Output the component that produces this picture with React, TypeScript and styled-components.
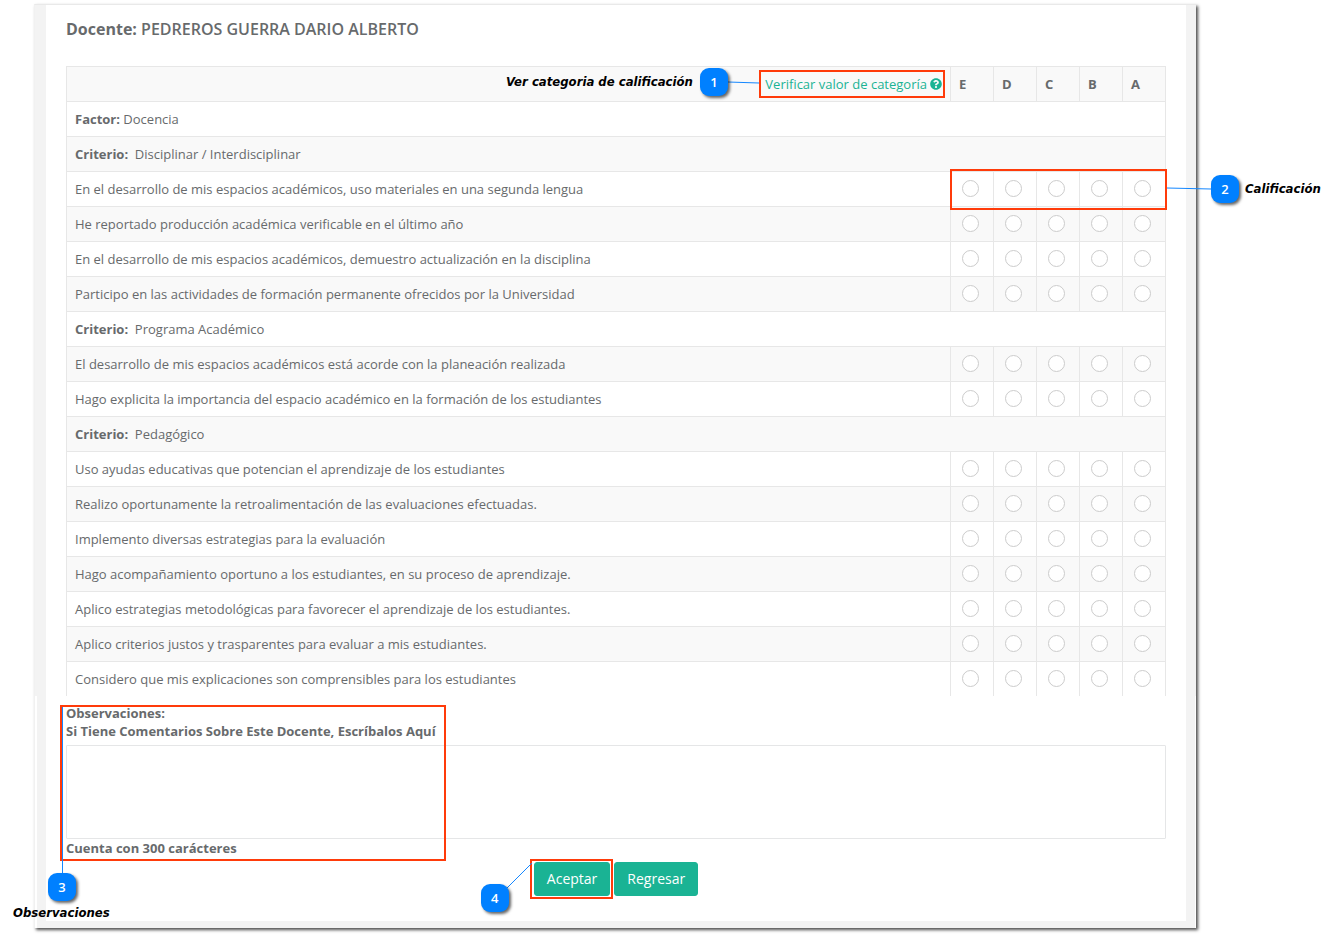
import React, { useState } from "react";
import styled, { createGlobalStyle } from "styled-components";
import { FaQuestionCircle } from "react-icons/fa";

const GlobalStyle = createGlobalStyle`
  *, *::before, *::after { box-sizing: border-box; }
  body {
    margin: 0;
    background: #fff;
    color: #676a6c;
    font: 13px/18px "Open Sans", "Noto Sans", sans-serif;
  }
`;

const Page = styled.main`
  padding: 4px 141px 9px 34px;
`;

const Frame = styled.form`
  border-top: 1px solid #e9e9e9;
  border-left: 1px solid #f1f1f1;
  background: #fff;
  box-shadow: 2px 2px 3px rgba(0, 0, 0, 0.7);
`;

const SurveySection = styled.section`
  padding: 14px 20px 0;
  border: solid #f3f3f3;
  border-width: 0 10px 0 11px;
`;

const CommentSection = styled.section`
  margin: 0 1px 0 2px;
  padding: 8px 20px 25px;
  border: solid #f3f3f3;
  border-width: 0 9px 7px 9px;
`;

const Title = styled.h1`
  margin: 0 0 27px;
  font-size: 16px;
  line-height: 20px;
  font-weight: 600;

  strong { font-weight: 700; }
`;

const Table = styled.table`
  width: 100%;
  table-layout: fixed;
  border-spacing: 0;
  border-left: 1px solid #e7e7e7;
`;

const Row = styled.tr<{ $shaded: boolean }>`
  background: ${(p) => (p.$shaded ? "#f9f9f9" : "#fff")};
`;

const Cell = styled.td`
  height: 35px;
  padding: 0 8px;
  border-top: 1px solid #e7e7e7;
  border-right: 1px solid #e7e7e7;
  text-align: left;
  font-weight: 400;
`;

const LinkCell = styled(Cell)`
  text-align: right;
`;

const GradeHeader = styled(Cell)`
  width: 43px;
  font-weight: 700;
`;

const RadioCell = styled(Cell)`
  position: relative;
`;

const Radio = styled.input`
  display: block;
  appearance: none;
  width: 17px;
  height: 17px;
  margin: 0 3px 2px;
  border: 1px solid #ccc;
  border-radius: 50%;
  background: #fff;

  &:checked { border-color: #1ab394; background: radial-gradient(#1ab394 45%, #fff 50%); }
`;

const HelpLink = styled.a`
  position: relative;
  display: inline-flex;
  align-items: center;
  gap: 3px;
  color: #1ab394;
  text-decoration: none;
  white-space: nowrap;
`;

const CommentLabel = styled.label`
  display: block;
  font-weight: 700;
`;

const CommentBox = styled.textarea`
  display: block;
  width: 100%;
  height: 94px;
  margin-top: 5px;
  padding: 6px 12px;
  border: 1px solid #e5e6e7;
  border-radius: 1px;
  background: #fff;
  color: inherit;
  font: inherit;
  resize: none;
`;

const Counter = styled.p`
  margin: 0;
  font-weight: 700;
`;

const CommentArea = styled.div`
  position: relative;
`;

const Actions = styled.div`
  display: flex;
  justify-content: center;
  gap: 4px;
  margin-top: 5px;
`;

const ActionItem = styled.div`
  position: relative;
`;

const ActionButton = styled.button`
  display: block;
  height: 34px;
  padding: 0 12px;
  border: 1px solid #1ab394;
  border-radius: 3px;
  background: #1ab394;
  color: #fff;
  font: 14px/20px "Open Sans", "Noto Sans", sans-serif;
`;

/* Callouts lie over the form; each one is placed relative to the part it explains. */
type Box = { x: number; y: number };

const Highlight = styled.span<{ $top: number; $left?: number; $right?: number; $width: number; $height: number }>`
  position: absolute;
  z-index: 1;
  top: ${(p) => p.$top}px;
  ${(p) => (p.$left !== undefined ? `left: ${p.$left}px;` : `right: ${p.$right}px;`)}
  width: ${(p) => p.$width}px;
  height: ${(p) => p.$height}px;
  border: 2px solid #ff3b0a;
  pointer-events: none;
`;

const Connector = styled.svg`
  position: absolute;
  top: -2px;
  left: -2px;
  width: 1px;
  height: 1px;
  overflow: visible;
  stroke: #1487ff;
`;

const Badge = styled.span<{ $at: Box }>`
  position: absolute;
  left: ${(p) => p.$at.x - 2}px;
  top: ${(p) => p.$at.y - 2}px;
  width: 28px;
  height: 28px;
  border-radius: 9px;
  background: #0080ff;
  box-shadow: 2px 2px 3px rgba(0, 0, 0, 0.6);
  color: #fff;
  font-size: 13px;
  line-height: 29px;
  font-weight: 600;
  text-align: center;
`;

const Caption = styled.span<{ $at: Box }>`
  position: absolute;
  left: ${(p) => p.$at.x - 2}px;
  top: ${(p) => p.$at.y - 2}px;
  color: #000;
  font: italic 700 13px/18px "DejaVu Sans Condensed", "DejaVu Sans", sans-serif;
  white-space: nowrap;
`;

type CalloutProps = {
  number: number;
  text?: string;
  top: number;
  left?: number;
  right?: number;
  width: number;
  height: number;
  badge: Box;
  caption?: Box;
  from: Box;
  to: Box;
};

function Callout({ number, text, top, left, right, width, height, badge, caption, from, to }: CalloutProps) {
  return (
    <Highlight $top={top} $left={left} $right={right} $width={width} $height={height}>
      <Connector aria-hidden="true">
        <line x1={from.x} y1={from.y} x2={to.x} y2={to.y} />
      </Connector>
      <Badge $at={badge}>{number}</Badge>
      {text && caption && <Caption $at={caption}>{text}</Caption>}
    </Highlight>
  );
}

const grades = ["E", "D", "C", "B", "A"];

type Item = { label: string; name: string } | { question: string };

const items: Item[] = [
  { label: "Factor:", name: " Docencia" },
  { label: "Criterio:", name: "\u00a0 Disciplinar / Interdisciplinar" },
  { question: "En el desarrollo de mis espacios académicos, uso materiales en una segunda lengua" },
  { question: "He reportado producción académica verificable en el último año" },
  { question: "En el desarrollo de mis espacios académicos, demuestro actualización en la disciplina" },
  { question: "Participo en las actividades de formación permanente ofrecidos por la Universidad" },
  { label: "Criterio:", name: "\u00a0 Programa Académico" },
  { question: "El desarrollo de mis espacios académicos está acorde con la planeación realizada" },
  { question: "Hago explicita la importancia del espacio académico en la formación de los estudiantes" },
  { label: "Criterio:", name: "\u00a0 Pedagógico" },
  { question: "Uso ayudas educativas que potencian el aprendizaje de los estudiantes" },
  { question: "Realizo oportunamente la retroalimentación de las evaluaciones efectuadas." },
  { question: "Implemento diversas estrategias para la evaluación" },
  { question: "Hago acompañamiento oportuno a los estudiantes, en su proceso de aprendizaje." },
  { question: "Aplico estrategias metodológicas para favorecer el aprendizaje de los estudiantes." },
  { question: "Aplico criterios justos y trasparentes para evaluar a mis estudiantes." },
  { question: "Considero que mis explicaciones son comprensibles para los estudiantes" },
];

const firstQuestion = items.findIndex((item) => "question" in item);

export default function App() {
  const [comment, setComment] = useState("");

  return (
    <Page>
      <GlobalStyle />
      <Frame onSubmit={(e) => e.preventDefault()}>
        <SurveySection>
          <Title>
            <strong>Docente:</strong> PEDREROS GUERRA DARIO ALBERTO
          </Title>
          <Table>
            <thead>
              <Row $shaded>
                <LinkCell as="th">
                  <HelpLink href="#categorias">
                    Verificar valor de categoría
                    <FaQuestionCircle size={12} />
                    <Callout
                      number={1}
                      text="Ver categoria de calificación"
                      top={-5}
                      right={-3}
                      width={186}
                      height={28}
                      badge={{ x: -59, y: -2 }}
                      caption={{ x: -253, y: 3 }}
                      from={{ x: -31, y: 12 }}
                      to={{ x: 0, y: 13 }}
                    />
                  </HelpLink>
                </LinkCell>
                {grades.map((grade) => (
                  <GradeHeader as="th" scope="col" key={grade}>{grade}</GradeHeader>
                ))}
              </Row>
            </thead>
            <tbody>
              {items.map((item, index) => (
                <Row $shaded={index % 2 === 1} key={index}>
                  {"question" in item ? (
                    <>
                      <Cell as="th" scope="row">{item.question}</Cell>
                      {grades.map((grade) => (
                        <RadioCell key={grade}>
                          <Radio type="radio" name={`pregunta-${index}`} value={grade} aria-label={`${item.question}: ${grade}`} />
                          {index === firstQuestion && grade === "A" && (
                            <Callout
                              number={2}
                              text="Calificación"
                              top={-3}
                              right={-2}
                              width={217}
                              height={41}
                              badge={{ x: 261, y: 6 }}
                              caption={{ x: 295, y: 11 }}
                              from={{ x: 217, y: 19 }}
                              to={{ x: 261, y: 20 }}
                            />
                          )}
                        </RadioCell>
                      ))}
                    </>
                  ) : (
                    <Cell as="th" colSpan={6}>
                      <strong>{item.label}</strong>
                      {item.name}
                    </Cell>
                  )}
                </Row>
              ))}
            </tbody>
          </Table>
        </SurveySection>
        <CommentSection>
          <CommentArea>
            <CommentLabel htmlFor="observaciones">
              Observaciones:
              <br />
              Si Tiene Comentarios Sobre Este Docente, Escríbalos Aquí
            </CommentLabel>
            <CommentBox id="observaciones" maxLength={300} value={comment} onChange={(e) => setComment(e.target.value)} />
            <Counter>Cuenta con {300 - comment.length} carácteres</Counter>
            <Callout
              number={3}
              text="Observaciones"
              top={1}
              left={-6}
              width={386}
              height={156}
              badge={{ x: -12, y: 168 }}
              caption={{ x: -47, y: 199 }}
              from={{ x: 2.5, y: 2 }}
              to={{ x: 2.5, y: 168 }}
            />
          </CommentArea>
          <Actions>
            <ActionItem>
              <ActionButton type="submit">Aceptar</ActionButton>
              <Callout
                number={4}
                top={-3}
                left={-4}
                width={83}
                height={40}
                badge={{ x: -49, y: 25 }}
                from={{ x: -24, y: 30 }}
                to={{ x: 2, y: 4 }}
              />
            </ActionItem>
            <ActionButton type="button">Regresar</ActionButton>
          </Actions>
        </CommentSection>
      </Frame>
    </Page>
  );
}
